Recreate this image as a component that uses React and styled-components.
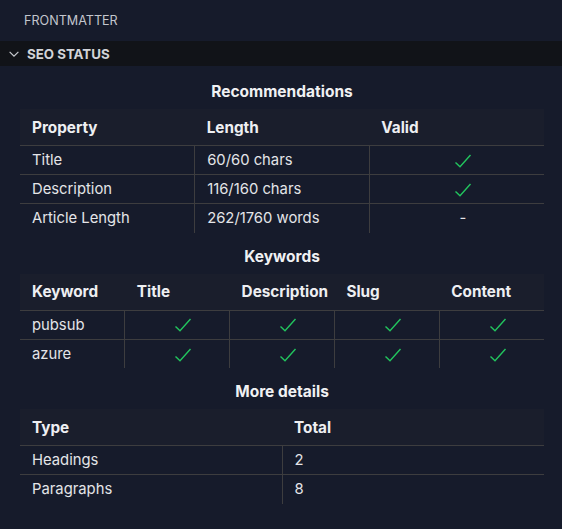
import React from 'react';
import styled, { createGlobalStyle } from 'styled-components';

const GlobalStyle = createGlobalStyle`
  html, body {
    margin: 0;
    padding: 0;
    background: #161b2b;
  }
  body {
    font-family: Inter, "Noto Sans", sans-serif;
    color: #e6e7ea;
  }
`;

const Panel = styled.div`
  width: 562px;
  height: 529px;
  background: #161b2b;
  overflow: hidden;
`;

const PanelTitle = styled.div`
  height: 41px;
  display: flex;
  align-items: center;
  padding-left: 24px;
  font-size: 12.6px;
  color: #c3c6cd;
  text-transform: uppercase;
`;

const SectionBar = styled.div`
  height: 25px;
  display: flex;
  align-items: center;
  gap: 6px;
  padding-left: 7px;
  background: #111318;
  font-size: 13.3px;
  font-weight: 700;
  color: #d2d4d9;
  text-transform: uppercase;
`;

const Content = styled.div`
  padding: 0 18px 0 20px;
`;

const Heading = styled.h3`
  margin: 14px 0 7px;
  height: 20px;
  line-height: 20px;
  text-align: center;
  font-size: 15.5px;
  font-weight: 700;
  color: #f0f1f3;
  &:first-child {
    margin-top: 16px;
  }
`;

const Table = styled.table`
  width: 100%;
  table-layout: fixed;
  border-collapse: collapse;
  font-size: 14.8px;
`;

const HeadCell = styled.th`
  height: 36px;
  padding: 0 0 0 12px;
  text-align: left;
  font-size: 15.3px;
  font-weight: 700;
  color: #eeeff2;
  background: #1a1e2c;
  border-bottom: 1px solid #3d3d3f;
  white-space: nowrap;
`;

const Row = styled.tr`
  height: 29px;
  border-bottom: 1px solid #3d3d3f;
  &:last-child {
    border-bottom: none;
  }
`;

const Cell = styled.td`
  padding: 0 0 0 12px;
  text-align: ${p => (p.$center ? 'center' : 'left')};
  color: #e4e5e8;
  white-space: nowrap;
  & + & {
    border-left: 1px solid #3d3d3f;
  }
`;

const Chevron = () => (
  <svg width="14" height="14" viewBox="0 0 16 16" fill="none">
    <path d="M3 5.5l5 5 5-5" stroke="#c9ccd2" strokeWidth="1.3" />
  </svg>
);

const CheckMark = styled.svg`
  display: inline-block;
  vertical-align: middle;
`;

const Check = () => (
  <CheckMark width="18" height="16" viewBox="0 0 18 16" fill="none">
    <path d="M1.5 9.5l4.5 4.2L16.5 2" stroke="#22c55e" strokeWidth="1.4" />
  </CheckMark>
);

const Dash = styled.span`
  color: #e4e5e8;
`;

const recommendations = [
  ['Title', '60/60 chars', true],
  ['Description', '116/160 chars', true],
  ['Article Length', '262/1760 words', null],
];

const keywords = ['pubsub', 'azure'];

const details = [
  ['Headings', '2'],
  ['Paragraphs', '8'],
];

export default function App() {
  return (
    <Panel>
      <GlobalStyle />
      <PanelTitle>Frontmatter</PanelTitle>
      <SectionBar>
        <Chevron />
        SEO Status
      </SectionBar>
      <Content>
        <Heading>Recommendations</Heading>
        <Table>
          <thead>
            <tr>
              <HeadCell>Property</HeadCell>
              <HeadCell>Length</HeadCell>
              <HeadCell>Valid</HeadCell>
            </tr>
          </thead>
          <tbody>
            {recommendations.map(([name, len, valid]) => (
              <Row key={name}>
                <Cell>{name}</Cell>
                <Cell>{len}</Cell>
                <Cell $center>{valid ? <Check /> : <Dash>-</Dash>}</Cell>
              </Row>
            ))}
          </tbody>
        </Table>

        <Heading>Keywords</Heading>
        <Table>
          <thead>
            <tr>
              <HeadCell>Keyword</HeadCell>
              <HeadCell>Title</HeadCell>
              <HeadCell>Description</HeadCell>
              <HeadCell>Slug</HeadCell>
              <HeadCell>Content</HeadCell>
            </tr>
          </thead>
          <tbody>
            {keywords.map(k => (
              <Row key={k}>
                <Cell>{k}</Cell>
                <Cell $center><Check /></Cell>
                <Cell $center><Check /></Cell>
                <Cell $center><Check /></Cell>
                <Cell $center><Check /></Cell>
              </Row>
            ))}
          </tbody>
        </Table>

        <Heading>More details</Heading>
        <Table>
          <thead>
            <tr>
              <HeadCell>Type</HeadCell>
              <HeadCell>Total</HeadCell>
            </tr>
          </thead>
          <tbody>
            {details.map(([type, total]) => (
              <Row key={type}>
                <Cell>{type}</Cell>
                <Cell>{total}</Cell>
              </Row>
            ))}
          </tbody>
        </Table>
      </Content>
    </Panel>
  );
}
